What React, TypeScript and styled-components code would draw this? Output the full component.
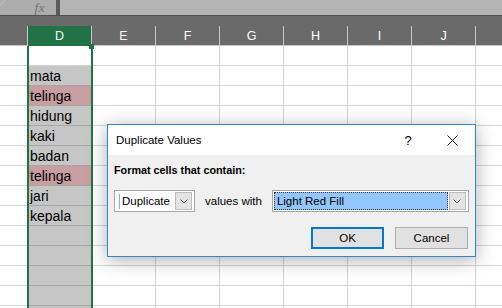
import styled, { createGlobalStyle } from "styled-components";

const GlobalStyle = createGlobalStyle`
  html, body {
    margin: 0;
    padding: 0;
    background: #ffffff;
  }
  body {
    width: 502px;
    height: 308px;
    overflow: hidden;
  }
`;

const COL_W = 64;
const ROW_H = 20;

const Screen = styled.div`
  position: relative;
  width: 502px;
  height: 308px;
  overflow: hidden;
  background: #ffffff;
  font-family: "Liberation Sans", Arial, sans-serif;
`;

const FormulaBar = styled.div`
  display: flex;
  height: 16px;
  box-sizing: border-box;
  background: #b3b3b3;
  border-bottom: 1px solid #4f4f4f;
`;

const NameArea = styled.div`
  position: relative;
  width: 56px;
  background: #adadad;
  display: flex;
  align-items: center;
  justify-content: flex-end;
  padding-right: 11px;
  box-sizing: border-box;
`;

const CheckStub = styled.svg`
  position: absolute;
  left: 0;
  top: 0;
`;

const Fx = styled.span`
  font-family: "Liberation Serif", "Times New Roman", serif;
  font-style: italic;
  font-size: 13px;
  line-height: 12px;
  color: #727272;
  letter-spacing: 0.5px;
`;

const Splitter = styled.div`
  width: 4px;
  background: #5a5a5a;
`;

const FormulaInput = styled.div`
  flex: 1;
  background: #b4b4b4;
`;

const HeaderBand = styled.div`
  background: #6a6a6a;
  padding-top: 10px;
`;

const GridRow = styled.div`
  display: flex;
  margin-left: -36px;
`;

const ColHead = styled.div<{ $active?: boolean }>`
  flex: 0 0 ${COL_W}px;
  height: ${ROW_H}px;
  box-sizing: border-box;
  border-right: 1px solid #c8c8c8;
  border-bottom: 1px solid ${(p) => (p.$active ? "#217346" : "#c8c8c8")};
  background: ${(p) => (p.$active ? "#217346" : "transparent")};
  color: #ffffff;
  font-size: 12.5px;
  display: flex;
  align-items: center;
  justify-content: center;
`;

const Body = styled.div`
  position: relative;
`;

type Fill = "none" | "sel" | "dup";

const fillColor: Record<Fill, string> = {
  none: "#ffffff",
  sel: "#c6c6c6",
  dup: "#c99ea3",
};

const Cell = styled.div<{ $fill: Fill }>`
  flex: 0 0 ${COL_W}px;
  height: ${ROW_H}px;
  box-sizing: border-box;
  border-right: 1px solid #d4d4d4;
  border-bottom: 1px solid ${(p) => (p.$fill === "none" ? "#d4d4d4" : "#a6a6a6")};
  background: ${(p) => fillColor[p.$fill]};
  color: #000000;
  font-size: 14px;
  line-height: 16px;
  padding: 0 0 1px 2px;
  display: flex;
  align-items: flex-end;
  white-space: nowrap;
  overflow: hidden;
`;

const SelectionFrame = styled.div`
  position: absolute;
  left: 27px;
  top: 0;
  bottom: 0;
  width: 66px;
  box-sizing: border-box;
  border-left: 2px solid #217346;
  border-right: 2px solid #217346;
  pointer-events: none;
`;

const FillHandle = styled.div`
  position: absolute;
  top: -2px;
  right: -3px;
  width: 5px;
  height: 5px;
  background: #217346;
`;

const Dialog = styled.div`
  position: absolute;
  left: 107px;
  top: 124px;
  width: 369px;
  height: 133px;
  box-sizing: border-box;
  border: 1px solid #2b86d6;
  background: #f0f0f0;
  box-shadow: 0 3px 18px rgba(0, 0, 0, 0.32);
  display: flex;
  flex-direction: column;
`;

const TitleBar = styled.div`
  height: 30px;
  background: #ffffff;
  display: flex;
  align-items: center;
  padding-left: 8px;
`;

const Title = styled.div`
  flex: 1;
  font-size: 11.5px;
  color: #000000;
`;

const TitleButton = styled.div<{ $w: number }>`
  width: ${(p) => p.$w}px;
  height: 30px;
  display: flex;
  align-items: center;
  justify-content: center;
  font-size: 13px;
  color: #000000;
`;

const HelpButton = styled(TitleButton)`
  margin-right: 6px;
`;

const DialogBody = styled.div`
  flex: 1;
  padding: 7px 6px 0 6px;
`;

const SectionLabel = styled.div`
  font-size: 10.8px;
  font-weight: bold;
  line-height: 16px;
  color: #000000;
`;

const ControlRow = styled.div`
  margin-top: 12px;
  height: 22px;
  display: flex;
  align-items: center;
`;

const Combo = styled.div<{ $w: number }>`
  width: ${(p) => p.$w}px;
  height: 22px;
  box-sizing: border-box;
  border: 1px solid #a6a6a6;
  background: #ffffff;
  display: flex;
  padding: 1px 2px 1px 1px;
`;

const ComboText = styled.div<{ $selected?: boolean }>`
  flex: 1;
  display: flex;
  align-items: center;
  font-size: 11.5px;
  color: #000000;
  box-sizing: border-box;
  padding-left: 2px;
  margin-right: 1px;
  background: ${(p) => (p.$selected ? "#93c6fa" : "transparent")};
  border: 1px ${(p) => (p.$selected ? "dotted #3a3a3a" : "solid transparent")};
`;

const Caret = styled.span`
  width: 1px;
  height: 15px;
  background: #7fb2e8;
  margin-right: 2px;
`;

const DropButton = styled.div`
  width: 17px;
  box-sizing: border-box;
  border: 1px solid #bdbdbd;
  background: #e3e3e3;
  display: flex;
  align-items: center;
  justify-content: center;
`;

const InlineLabel = styled.div`
  font-size: 11.5px;
  color: #000000;
  margin: 0 10px;
`;

const ButtonRow = styled.div`
  margin-top: 15px;
  display: flex;
  justify-content: flex-end;
  gap: 11px;
  padding-right: 1px;
`;

const Button = styled.div<{ $primary?: boolean }>`
  width: 73px;
  height: 22px;
  box-sizing: border-box;
  background: #e1e1e1;
  border: ${(p) => (p.$primary ? "2px solid #0078d7" : "1px solid #adadad")};
  display: flex;
  align-items: center;
  justify-content: center;
  font-size: 11.5px;
  color: #000000;
`;

// C and K are only partly on screen, so their letters are scrolled out of view
const columns = [
  { key: "C", label: "" },
  { key: "D", label: "D" },
  { key: "E", label: "E" },
  { key: "F", label: "F" },
  { key: "G", label: "G" },
  { key: "H", label: "H" },
  { key: "I", label: "I" },
  { key: "J", label: "J" },
  { key: "K", label: "" },
];

const values: (string | null)[] = [
  null,
  "mata",
  "telinga",
  "hidung",
  "kaki",
  "badan",
  "telinga",
  "jari",
  "kepala",
  "",
  "",
  "",
  "",
  "",
];

const duplicates = new Set(["telinga"]);

function Chevron() {
  return (
    <svg width="8" height="5" viewBox="0 0 8 5">
      <path d="M0.5 0.5 L4 4 L7.5 0.5" fill="none" stroke="#5f5f5f" strokeWidth="1" />
    </svg>
  );
}

function CloseIcon() {
  return (
    <svg width="11" height="11" viewBox="0 0 11 11">
      <path d="M0.5 0.5 L10.5 10.5 M10.5 0.5 L0.5 10.5" stroke="#1a1a1a" strokeWidth="1" />
    </svg>
  );
}

function cellFill(col: string, value: string | null): Fill {
  if (col !== "D" || value === null) return "none";
  return duplicates.has(value) ? "dup" : "sel";
}

export default function App() {
  return (
    <Screen>
      <GlobalStyle />
      <FormulaBar>
        <NameArea>
          <CheckStub width="8" height="8" viewBox="0 0 8 8">
            <path d="M0 5 L5 0" stroke="#c4c4c4" strokeWidth="1" />
          </CheckStub>
          <Fx>fx</Fx>
        </NameArea>
        <Splitter />
        <FormulaInput />
      </FormulaBar>

      <HeaderBand>
        <GridRow>
          {columns.map((c) => (
            <ColHead key={c.key} $active={c.key === "D"}>
              {c.label}
            </ColHead>
          ))}
        </GridRow>
      </HeaderBand>

      <Body>
        {values.map((v, r) => (
          <GridRow key={r}>
            {columns.map((c) => (
              <Cell key={c.key} $fill={cellFill(c.key, v)}>
                {c.key === "D" ? v : null}
              </Cell>
            ))}
          </GridRow>
        ))}
        <SelectionFrame>
          <FillHandle />
        </SelectionFrame>
      </Body>

      <Dialog>
        <TitleBar>
          <Title>Duplicate Values</Title>
          <HelpButton $w={30}>?</HelpButton>
          <TitleButton $w={46}>
            <CloseIcon />
          </TitleButton>
        </TitleBar>
        <DialogBody>
          <SectionLabel>Format cells that contain:</SectionLabel>
          <ControlRow>
            <Combo $w={81}>
              <ComboText>
                <Caret />
                Duplicate
              </ComboText>
              <DropButton>
                <Chevron />
              </DropButton>
            </Combo>
            <InlineLabel>values with</InlineLabel>
            <Combo $w={197}>
              <ComboText $selected>Light Red Fill</ComboText>
              <DropButton>
                <Chevron />
              </DropButton>
            </Combo>
          </ControlRow>
          <ButtonRow>
            <Button $primary>OK</Button>
            <Button>Cancel</Button>
          </ButtonRow>
        </DialogBody>
      </Dialog>
    </Screen>
  );
}
